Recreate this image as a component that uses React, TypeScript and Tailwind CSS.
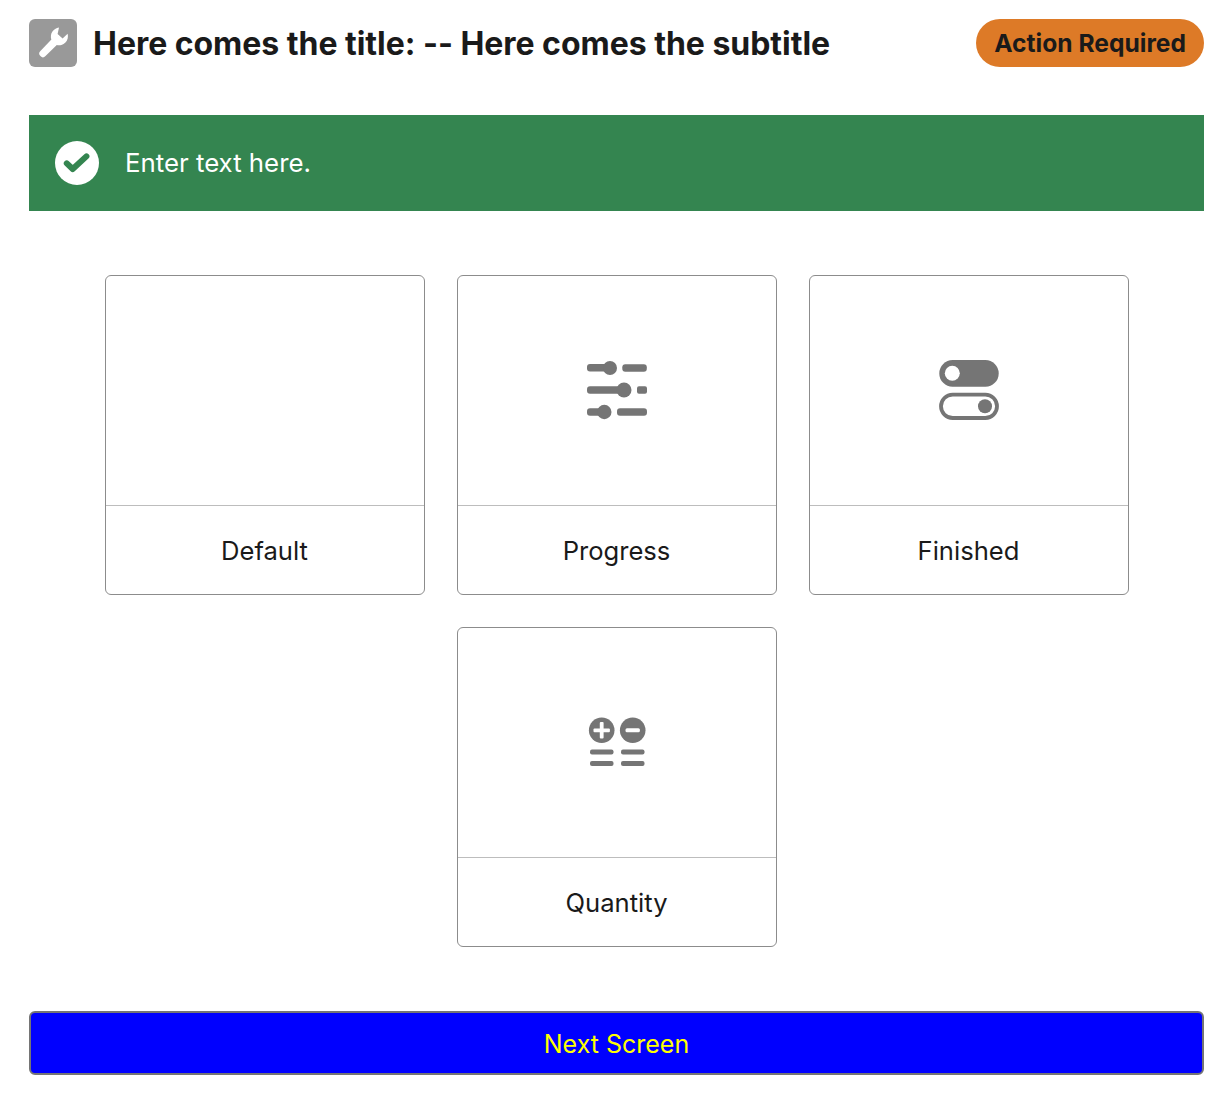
function WrenchIcon() {
  return (
    <svg width="48" height="48" viewBox="0 0 48 48" fill="#fff">
      <path d="M30 8.6 A9 9 0 0 0 22.4 20.6 L11.4 32 A3.6 3.6 0 0 0 16.5 37.1 L27.8 26 A9 9 0 0 0 38.6 14.8 L33.6 19.6 L28.6 15 Z" />
    </svg>
  );
}

function CheckIcon() {
  return (
    <svg width="44" height="44" viewBox="0 0 44 44">
      <circle cx="22" cy="22" r="22" fill="#fff" />
      <path d="M11.8 22.4 L17.7 28 L31.4 15.4" fill="none" stroke="#348550" strokeWidth="6" strokeLinecap="round" strokeLinejoin="round" />
    </svg>
  );
}

function SlidersIcon() {
  return (
    <svg width="60" height="60" viewBox="0 0 60 60" fill="#757575">
      <rect x="0" y="4" width="24" height="7.5" rx="3" />
      <circle cx="23" cy="8" r="7" />
      <rect x="35.3" y="4.2" width="24.5" height="7.5" rx="3" />
      <rect x="0" y="26.2" width="38" height="7.5" rx="3" />
      <circle cx="37" cy="30" r="7.5" />
      <rect x="50" y="26.2" width="10" height="7.5" rx="2" />
      <rect x="0" y="48.2" width="18" height="7.5" rx="3" />
      <circle cx="17.3" cy="52" r="7.2" />
      <rect x="30" y="48.2" width="30" height="7.5" rx="3" />
    </svg>
  );
}

function ToggleIcon() {
  return (
    <svg width="60" height="60" viewBox="0 0 60 60">
      <rect x="0.3" y="0" width="59.4" height="26.7" rx="13.3" fill="#757575" />
      <circle cx="13.3" cy="13.3" r="7.5" fill="#fff" />
      <rect x="2" y="34.6" width="56" height="23.4" rx="11.7" fill="#fff" stroke="#757575" strokeWidth="3.8" />
      <circle cx="46" cy="46.3" r="7" fill="#757575" />
    </svg>
  );
}

function QuantityIcon() {
  return (
    <svg width="60" height="60" viewBox="0 0 60 60" fill="#757575">
      <circle cx="14.7" cy="18.3" r="12.8" />
      <rect x="6.5" y="16.4" width="16.4" height="3.8" rx="1" fill="#fff" />
      <rect x="12.8" y="10.1" width="3.8" height="16.4" rx="1" fill="#fff" />
      <circle cx="45.7" cy="18.3" r="12.8" />
      <rect x="38.5" y="16.3" width="14.4" height="4" rx="1.5" fill="#fff" />
      <rect x="3" y="37.6" width="23.5" height="5" rx="2" />
      <rect x="34" y="37.6" width="23.5" height="5" rx="2" />
      <rect x="3" y="49" width="23.5" height="5" rx="2" />
      <rect x="34" y="49" width="23.5" height="5" rx="2" />
    </svg>
  );
}

const cards = [
  { label: "Default", icon: null },
  { label: "Progress", icon: <SlidersIcon /> },
  { label: "Finished", icon: <ToggleIcon /> },
  { label: "Quantity", icon: <QuantityIcon /> },
];

export default function App() {
  return (
    <div className="w-[1230px] h-[1094px] bg-white pl-[29px] pr-[26px] pt-[19px] font-['Inter',sans-serif] text-[#1a1a1a]">
      {/* Header */}
      <div className="flex items-center justify-between h-12">
        <div className="flex items-center gap-4">
          <div className="w-12 h-12 rounded-md bg-[#999999]">
            <WrenchIcon />
          </div>
          <h1 className="pt-0.5 text-[32px] leading-none font-bold tracking-[-0.03px]">
            Here comes the title: -- Here comes the subtitle
          </h1>
        </div>
        <div className="flex items-center h-12 px-[18px] rounded-full bg-[#dd7a27] text-[24.6px] font-bold">
          <span className="pt-px">Action Required</span>
        </div>
      </div>

      {/* Banner */}
      <div className="flex items-center gap-[26px] h-24 mt-12 pl-[26px] bg-[#348550] text-white text-[25.8px]">
        <CheckIcon />
        <span>Enter text here.</span>
      </div>

      {/* Cards */}
      <div className="flex flex-wrap justify-center gap-8 mt-16">
        {cards.map((card) => (
          <div key={card.label} className="flex flex-col w-80 h-80 rounded-md border border-[#8c8c8c] bg-white">
            <div className="flex items-center justify-center h-[230px] pb-px border-b border-[#bdbdbd]">
              {card.icon}
            </div>
            <div className="flex flex-1 items-center justify-center pt-0.5 text-[25.6px]">{card.label}</div>
          </div>
        ))}
      </div>

      {/* Next */}
      <button className="flex items-center justify-center w-full h-16 mt-16 pt-1 rounded-md border-2 border-[#757575] bg-[#0000ff] text-[#ffff00] text-[25px]">
        Next Screen
      </button>
    </div>
  );
}
